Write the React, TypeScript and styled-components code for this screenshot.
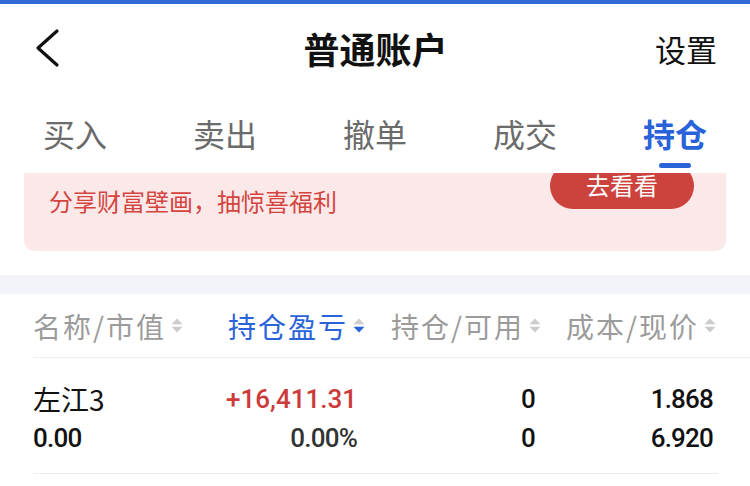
import styled, { createGlobalStyle } from 'styled-components';

const GlobalStyle = createGlobalStyle`
  html, body {
    margin: 0;
    padding: 0;
    background: #ffffff;
  }
  body {
    font-family: 'Noto Sans CJK SC', 'Noto Sans', sans-serif;
  }
`;

const Page = styled.div`
  width: 750px;
  height: 486px;
  overflow: hidden;
  background: #ffffff;
  color: #111111;
`;

const TopStripe = styled.div`
  height: 4px;
  background: #2f69d6;
`;

const NavBar = styled.header`
  height: 88px;
  display: grid;
  grid-template-columns: 120px 1fr 120px;
  align-items: center;
  padding: 0 33px 0 34px;
`;

const BackButton = styled.button`
  width: 40px;
  height: 44px;
  padding: 0;
  border: 0;
  background: none;
  display: flex;
  align-items: center;
`;

const Title = styled.h1`
  margin: 0;
  text-align: center;
  font-size: 36px;
  font-weight: 700;
  line-height: 1;
  color: #111111;
`;

const Settings = styled.span`
  justify-self: end;
  font-size: 31px;
  line-height: 1;
  color: #111111;
`;

const Tabs = styled.nav`
  height: 81px;
  display: grid;
  grid-template-columns: repeat(5, 1fr);
`;

const Tab = styled.div<{ $active?: boolean }>`
  position: relative;
  display: flex;
  justify-content: center;
  padding-top: 21px;
  font-size: 32px;
  line-height: 40px;
  font-weight: ${(p) => (p.$active ? 700 : 400)};
  color: ${(p) => (p.$active ? '#2962d9' : '#6b6b6b')};

  &::after {
    content: '';
    display: ${(p) => (p.$active ? 'block' : 'none')};
    position: absolute;
    left: 59px;
    top: 71px;
    width: 32px;
    height: 5px;
    border-radius: 3px;
    background: #2962d9;
  }
`;

const Banner = styled.section`
  margin: 0 24px;
  height: 78px;
  display: flex;
  align-items: flex-start;
  justify-content: space-between;
  padding: 0 32px 0 25px;
  overflow: hidden;
  background: #fbe9e9;
  border-radius: 0 0 10px 10px;
`;

const BannerText = styled.span`
  padding-top: 14px;
  font-size: 24px;
  line-height: 28px;
  color: #d4453f;
`;

const BannerButton = styled.button`
  margin-top: -10px;
  width: 144px;
  height: 46px;
  padding: 0 0 2px;
  border: 0;
  border-radius: 23px;
  background: #cc433e;
  color: #ffffff;
  font-family: inherit;
  font-size: 24px;
  line-height: 1;
`;

const Spacer = styled.div`
  height: 24px;
`;

const GrayBand = styled.div`
  height: 19px;
  background: #f3f4f9;
`;

const Table = styled.section`
  padding-left: 33px;
`;

const Columns = `
  display: grid;
  grid-template-columns: 195px 137px 176px 175px;
`;

const HeadRow = styled.div`
  ${Columns}
  height: 63px;
  align-items: center;
  border-bottom: 1px solid #ededed;
`;

const HeadCell = styled.div<{ $active?: boolean; $left?: boolean }>`
  display: flex;
  align-items: center;
  justify-content: ${(p) => (p.$left ? 'flex-start' : 'flex-end')};
  gap: 5px;
  font-size: 28px;
  letter-spacing: 2px;
  line-height: 1;
  color: ${(p) => (p.$active ? '#2962d9' : '#9b9b9b')};
`;

const BodyRow = styled.div`
  ${Columns}
  width: 685px;
  padding: 22px 0 15px;
  border-bottom: 1px solid #ededed;
`;

const Cell = styled.div<{ $left?: boolean; $pad?: number }>`
  display: flex;
  flex-direction: column;
  align-items: ${(p) => (p.$left ? 'flex-start' : 'flex-end')};
  padding-right: ${(p) => p.$pad ?? 0}px;
`;

const Name = styled.span`
  font-size: 28px;
  line-height: 39px;
  color: #111111;
`;

const Num = styled.span<{ $color?: string; $wide?: boolean }>`
  font-family: 'Roboto', 'Liberation Sans', sans-serif;
  font-size: 26px;
  font-weight: 500;
  letter-spacing: ${(p) => (p.$wide ? '0' : '-0.8px')};
  line-height: 39px;
  color: ${(p) => p.$color ?? '#111111'};
`;

const SortIcon = ({ active }: { active?: boolean }) => (
  <svg width="12" height="15" viewBox="0 0 12 15">
    <path d="M0.5 6.2 L6 0.5 L11.5 6.2 Z" fill="#cccccc" />
    <path d="M0.5 8.8 L6 14.5 L11.5 8.8 Z" fill={active ? '#2962d9' : '#cccccc'} />
  </svg>
);

const tabs = ['买入', '卖出', '撤单', '成交', '持仓'];

export default function App() {
  return (
    <Page>
      <GlobalStyle />
      <TopStripe />
      <NavBar>
        <BackButton aria-label="返回">
          <svg width="26" height="40" viewBox="0 0 26 40">
            <path
              d="M23 3 L4 20 L23 37"
              fill="none"
              stroke="#111111"
              strokeWidth="3.2"
              strokeLinecap="round"
              strokeLinejoin="round"
            />
          </svg>
        </BackButton>
        <Title>普通账户</Title>
        <Settings>设置</Settings>
      </NavBar>
      <Tabs>
        {tabs.map((t) => (
          <Tab key={t} $active={t === '持仓'}>
            {t}
          </Tab>
        ))}
      </Tabs>
      <Banner>
        <BannerText>分享财富壁画，抽惊喜福利</BannerText>
        <BannerButton>去看看</BannerButton>
      </Banner>
      <Spacer />
      <GrayBand />
      <Table>
        <HeadRow>
          <HeadCell $left>
            名称/市值
            <SortIcon />
          </HeadCell>
          <HeadCell $active>
            持仓盈亏
            <SortIcon active />
          </HeadCell>
          <HeadCell>
            持仓/可用
            <SortIcon />
          </HeadCell>
          <HeadCell>
            成本/现价
            <SortIcon />
          </HeadCell>
        </HeadRow>
        <BodyRow>
          <Cell $left>
            <Name>左江3</Name>
            <Num>0.00</Num>
          </Cell>
          <Cell $pad={8}>
            <Num $color="#cc3a3a" $wide>
              +16,411.31
            </Num>
            <Num $color="#333333">0.00%</Num>
          </Cell>
          <Cell $pad={6}>
            <Num>0</Num>
            <Num>0</Num>
          </Cell>
          <Cell $pad={3}>
            <Num>1.868</Num>
            <Num>6.920</Num>
          </Cell>
        </BodyRow>
      </Table>
    </Page>
  );
}
